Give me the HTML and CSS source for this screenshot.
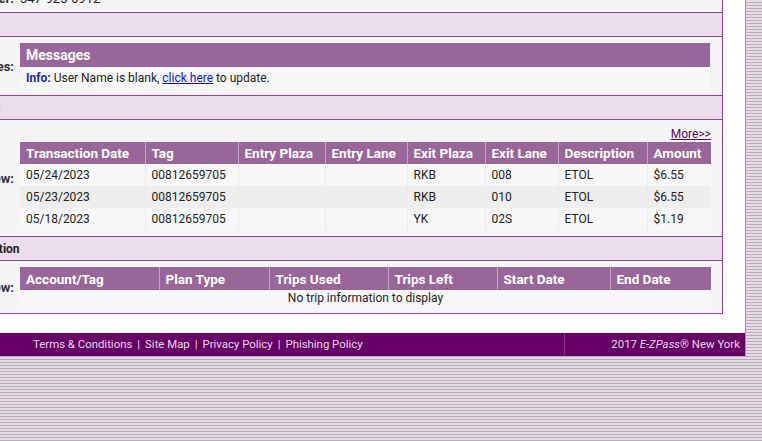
FILE: index.html
```html
<!DOCTYPE html>
<html>
<head>
<meta charset="utf-8">
<link rel="stylesheet" href="styles.css">
</head>
<body>
<div class="page">
  <div class="panel">
    <div class="row light">
      <div class="label top">Phone Number:</div>
      <div class="value plain">347-925-6912</div>
    </div>
    <div class="row section"><span class="section-title"></span></div>
    <div class="row light">
      <div class="label mid">Messages:</div>
      <div class="value">
        <div class="msgbox">
          <div class="msghead">Messages</div>
          <div class="msgbody"><b class="info">Info:</b> User Name is blank, <a href="#" class="blue">click here</a> to update.</div>
        </div>
      </div>
    </div>
    <div class="row section"><span class="section-title thin">Recent Transactions:</span></div>
    <div class="row light">
      <div class="label mid">Overview:</div>
      <div class="value">
        <div class="more"><a href="#">More&gt;&gt;</a></div>
        <table class="grid tx">
          <colgroup>
            <col style="width:125px"><col style="width:93px"><col style="width:87px"><col style="width:82px"><col style="width:78px"><col style="width:73px"><col style="width:89px"><col>
          </colgroup>
          <thead>
            <tr><th>Transaction Date</th><th>Tag</th><th>Entry Plaza</th><th>Entry Lane</th><th>Exit Plaza</th><th>Exit Lane</th><th>Description</th><th>Amount</th></tr>
          </thead>
          <tbody>
            <tr><td>05/24/2023</td><td>00812659705</td><td></td><td></td><td>RKB</td><td>008</td><td>ETOL</td><td>$6.55</td></tr>
            <tr class="alt"><td>05/23/2023</td><td>00812659705</td><td></td><td></td><td>RKB</td><td>010</td><td>ETOL</td><td>$6.55</td></tr>
            <tr><td>05/18/2023</td><td>00812659705</td><td></td><td></td><td>YK</td><td>02S</td><td>ETOL</td><td>$1.19</td></tr>
          </tbody>
        </table>
      </div>
    </div>
    <div class="row section"><span class="section-title trip">Trip Information</span></div>
    <div class="row light">
      <div class="label mid">Overview:</div>
      <div class="value">
        <table class="grid trips">
          <colgroup>
            <col style="width:139px"><col style="width:110px"><col style="width:119px"><col style="width:109px"><col style="width:113px"><col>
          </colgroup>
          <thead>
            <tr><th>Account/Tag</th><th>Plan Type</th><th>Trips Used</th><th>Trips Left</th><th>Start Date</th><th>End Date</th></tr>
          </thead>
          <tbody>
            <tr><td colspan="6" class="empty">No trip information to display</td></tr>
          </tbody>
        </table>
      </div>
    </div>
  </div>
  <div class="footer">
    <div class="foot-links">
      <a href="#">Terms &amp; Conditions</a><span class="sep">|</span><a href="#">Site Map</a><span class="sep">|</span><a href="#">Privacy Policy</a><span class="sep">|</span><a href="#">Phishing Policy</a>
    </div>
    <div class="foot-copy">2017 <i>E-ZPass</i>® New York</div>
  </div>
</div>
</body>
</html>
```
FILE: styles.css
```css
html, body {
  margin: 0;
  padding: 0;
}
body {
  width: 762px;
  height: 441px;
  overflow: hidden;
  font-family: Roboto, "Liberation Sans", Arial, sans-serif;
  font-size: 12px;
  color: #222;
  background: repeating-linear-gradient(to bottom, #e4dce4 0px, #e4dce4 2px, #b7acb7 2px, #b7acb7 3px);
}
.page {
  width: 845px;
  margin-left: -100px;
  margin-top: -12px;
  background: #fff;
  border-right: 1px solid #9c9c9c;
}
.panel {
  margin-right: 22px;
  border: 1px solid #8e448e;
  margin-bottom: 19px;
}
.row {
  border-bottom: 1px solid #8e448e;
  display: grid;
  grid-template-columns: 113px 1fr;
}
.row:last-child {
  border-bottom: none;
}
.light {
  background: #f5f5f5;
}
.section {
  background: #ebddeb;
  height: 23px;
  display: flex;
  align-items: center;
}
.section-title {
  font-weight: bold;
  font-size: 12px;
  color: #222;
}
.section-title.thin {
  font-weight: normal;
  color: #777;
  margin-left: -12px;
}
.section-title.trip {
  padding-left: 31px;
}
.label {
  text-align: right;
  font-weight: bold;
  font-size: 13px;
  color: #333;
  white-space: nowrap;
  overflow: hidden;
  line-height: 23px;
  height: 23px;
}
.label.top {
  line-height: 19px;
}
.label.mid {
  height: auto;
  align-self: center;
}
.value {
  padding: 6px 11px 6px 6px;
}
.value.plain {
  padding: 0 0 0 6px;
  line-height: 19px;
  height: 23px;
  font-size: 13px;
}
.msgbox {
  background: #f7f7f7;
  border-right: 1px solid #ececec;
  margin-bottom: 1px;
}
.msghead {
  background: #996699;
  color: #fff;
  font-weight: bold;
  font-size: 14px;
  height: 24px;
  line-height: 24px;
  padding-left: 6px;
}
.msgbody {
  height: 21px;
  line-height: 22px;
  padding-left: 6px;
  font-size: 12px;
}
.info {
  color: #1c2aa0;
}
a.blue {
  color: #1010dd;
}
.more {
  text-align: right;
  height: 16px;
  line-height: 16px;
  font-size: 12px;
}
.more a {
  color: #660066;
}
table.grid {
  width: 100%;
  border-collapse: collapse;
  table-layout: fixed;
}
.grid th {
  background: #996699;
  color: #fff;
  font-weight: bold;
  font-size: 13.5px;
  text-align: left;
  height: 22px;
  padding: 0 6px;
  border-left: 1px solid #c4a4c4;
  white-space: nowrap;
  overflow: hidden;
}
.grid th:first-child {
  border-left: none;
}
.grid td {
  height: 22px;
  padding: 0 6px;
  background: #f7f7f7;
  border-left: 1px solid #eaeaea;
  font-size: 12px;
}
.grid td:first-child {
  border-left: none;
}
.grid tr.alt td {
  background: #eeeeee;
}
.trips th {
  height: 23px;
}
.grid td.empty {
  text-align: center;
  height: 17px;
  line-height: 15px;
}
.footer {
  display: flex;
  background: #660066;
  color: #e8d8e8;
  height: 23px;
  line-height: 23px;
  font-size: 11.4px;
}
.foot-links {
  flex: 1;
  padding-left: 133px;
}
.foot-links a {
  color: #e8d8e8;
  text-decoration: none;
}
.sep {
  padding: 0 5px;
}
.foot-copy {
  width: 175px;
  border-left: 1px solid #7d307d;
  text-align: right;
  padding-right: 5px;
}
```
